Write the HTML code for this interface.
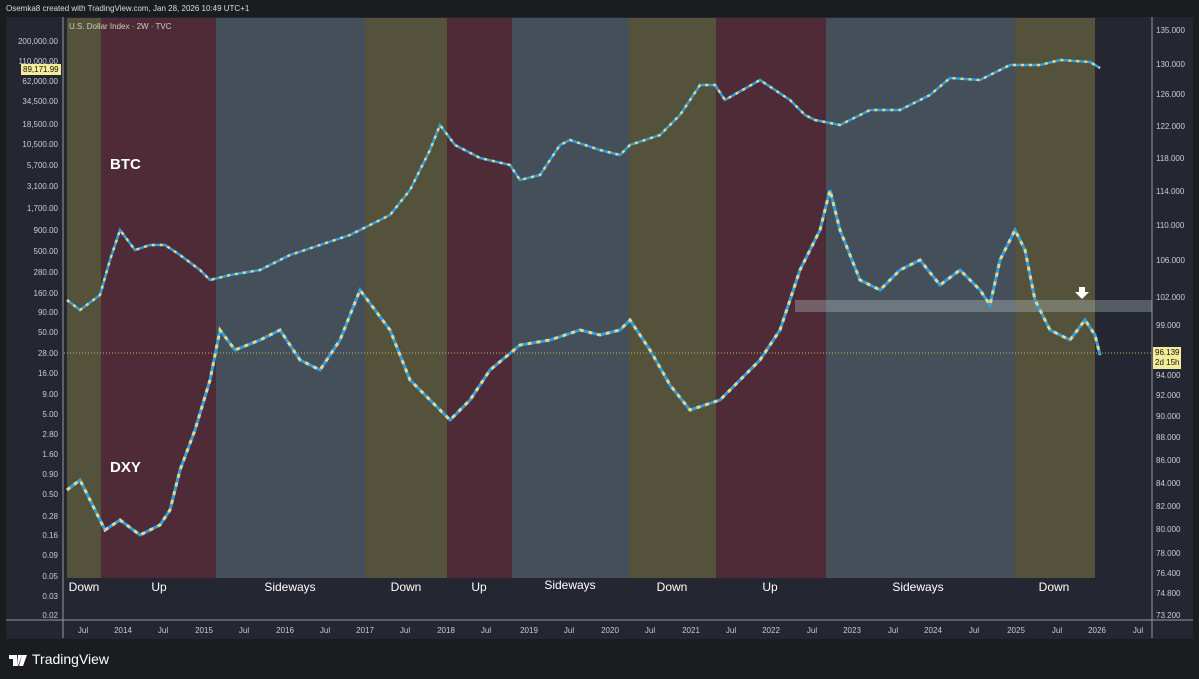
<!DOCTYPE html><html><head><style>
body{margin:0;width:1199px;height:679px;background:#1b1c1f;font-family:"Liberation Sans",sans-serif;overflow:hidden;position:relative}
.t{position:absolute;white-space:nowrap}
.la{position:absolute;right:1141px;font-size:8px;color:#c8ccd4}
.ra{position:absolute;left:1156px;font-size:8px;color:#c8ccd4}
.xa{position:absolute;top:626px;font-size:8px;color:#c8ccd4;transform:translateX(-50%)}
.lb{position:absolute;top:580px;font-size:12px;color:#fff;transform:translateX(-50%)}
</style></head><body>
<div class="t" style="left:6px;top:4px;font-size:8px;color:#ddd">Osemka8 created with TradingView.com, Jan 28, 2026 10:49 UTC+1</div>
<div style="position:absolute;left:6px;top:17px;width:1187px;height:622px;background:#242731"></div>
<svg style="position:absolute;left:0;top:0" width="1199" height="679">
<g>
<rect x="67" y="18" width="34" height="560" fill="#55523b"/>
<rect x="101" y="18" width="115" height="560" fill="#4f2b37"/>
<rect x="216" y="18" width="149" height="560" fill="#454f5a"/>
<rect x="365" y="18" width="82" height="560" fill="#55523b"/>
<rect x="447" y="18" width="65" height="560" fill="#4f2b37"/>
<rect x="512" y="18" width="117" height="560" fill="#454f5a"/>
<rect x="629" y="18" width="87" height="560" fill="#55523b"/>
<rect x="716" y="18" width="110" height="560" fill="#4f2b37"/>
<rect x="826" y="18" width="189" height="560" fill="#454f5a"/>
<rect x="1015" y="18" width="80" height="560" fill="#55523b"/>
</g>
<rect x="795" y="300" width="357" height="12" fill="rgba(200,215,215,0.3)"/>
<line x1="64" y1="353" x2="1152" y2="353" stroke="#c9b26a" stroke-dasharray="1,2" stroke-width="1"/>
<line x1="63" y1="17" x2="63" y2="638" stroke="#999" />
<line x1="1152" y1="17" x2="1152" y2="638" stroke="#999"/>
<line x1="6" y1="620" x2="1193" y2="620" stroke="#999"/>
<polyline fill="none" stroke="#2e9fe0" stroke-width="2.5" points="67,300 80,310 100,295 110,260 120,230 135,250 150,245 165,245 180,255 200,270 210,280 230,275 260,270 290,255 320,245 350,235 370,225 390,215 410,190 430,150 440,125 455,145 480,158 510,165 520,180 540,175 560,145 570,140 600,150 620,155 630,145 660,135 680,115 700,85 715,85 725,100 760,80 790,100 805,115 815,120 840,125 870,110 900,110 930,95 950,78 980,80 1010,65 1040,65 1060,60 1090,62 1100,68"/>
<polyline fill="none" stroke="#e6d58a" stroke-width="2.5" stroke-dasharray="3,5" points="67,300 80,310 100,295 110,260 120,230 135,250 150,245 165,245 180,255 200,270 210,280 230,275 260,270 290,255 320,245 350,235 370,225 390,215 410,190 430,150 440,125 455,145 480,158 510,165 520,180 540,175 560,145 570,140 600,150 620,155 630,145 660,135 680,115 700,85 715,85 725,100 760,80 790,100 805,115 815,120 840,125 870,110 900,110 930,95 950,78 980,80 1010,65 1040,65 1060,60 1090,62 1100,68"/>
<polyline fill="none" stroke="#2e9fe0" stroke-width="3" points="67,490 80,480 95,510 105,530 120,520 140,535 160,525 170,510 180,470 195,430 210,380 220,330 235,350 260,340 280,330 300,360 320,370 340,340 360,290 375,310 390,330 410,380 430,400 450,420 470,400 490,370 520,345 550,340 580,330 600,335 620,330 630,320 650,350 670,385 690,410 720,400 740,380 760,360 780,330 800,270 820,230 830,190 840,230 860,280 880,290 900,270 920,260 940,285 960,270 980,290 990,305 1000,260 1015,230 1025,250 1035,300 1050,330 1070,340 1085,320 1095,335 1100,355"/>
<polyline fill="none" stroke="#e6d58a" stroke-width="3" stroke-dasharray="4,5" points="67,490 80,480 95,510 105,530 120,520 140,535 160,525 170,510 180,470 195,430 210,380 220,330 235,350 260,340 280,330 300,360 320,370 340,340 360,290 375,310 390,330 410,380 430,400 450,420 470,400 490,370 520,345 550,340 580,330 600,335 620,330 630,320 650,350 670,385 690,410 720,400 740,380 760,360 780,330 800,270 820,230 830,190 840,230 860,280 880,290 900,270 920,260 940,285 960,270 980,290 990,305 1000,260 1015,230 1025,250 1035,300 1050,330 1070,340 1085,320 1095,335 1100,355"/>
<path d="M1079 287h6v5h4l-7 7-7-7h4z" fill="#fff"/>
<path d="M9 655h8v11h-4v-7h-4z M18 655h4l-4 11h-1z M22 655h5l-4 11h-4z" fill="#fff"/>
</svg>
<div class="t" style="left:69px;top:22px;font-size:8px;color:#cfcfb8">U.S. Dollar Index · 2W · TVC</div>
<div class="t" style="left:110px;top:156px;font-size:15px;font-weight:bold;color:#fff">BTC</div>
<div class="t" style="left:110px;top:459px;font-size:15px;font-weight:bold;color:#fff">DXY</div>
<div class="la" style="top:37px">200,000.00</div>
<div class="la" style="top:57px">110,000.00</div>
<div class="t" style="left:21px;top:64px;background:#f3ec9a;color:#111;font-size:8px;padding:1px 2px">89,171.99</div>
<div class="la" style="top:77px">62,000.00</div>
<div class="la" style="top:97px">34,500.00</div>
<div class="la" style="top:120px">18,500.00</div>
<div class="la" style="top:140px">10,500.00</div>
<div class="la" style="top:161px">5,700.00</div>
<div class="la" style="top:182px">3,100.00</div>
<div class="la" style="top:204px">1,700.00</div>
<div class="la" style="top:226px">900.00</div>
<div class="la" style="top:247px">500.00</div>
<div class="la" style="top:268px">280.00</div>
<div class="la" style="top:289px">160.00</div>
<div class="la" style="top:308px">90.00</div>
<div class="la" style="top:328px">50.00</div>
<div class="la" style="top:349px">28.00</div>
<div class="la" style="top:369px">16.00</div>
<div class="la" style="top:390px">9.00</div>
<div class="la" style="top:410px">5.00</div>
<div class="la" style="top:430px">2.80</div>
<div class="la" style="top:450px">1.60</div>
<div class="la" style="top:470px">0.90</div>
<div class="la" style="top:490px">0.50</div>
<div class="la" style="top:512px">0.28</div>
<div class="la" style="top:531px">0.16</div>
<div class="la" style="top:551px">0.09</div>
<div class="la" style="top:572px">0.05</div>
<div class="la" style="top:592px">0.03</div>
<div class="la" style="top:611px">0.02</div>
<div class="ra" style="top:26px">135.000</div>
<div class="ra" style="top:60px">130.000</div>
<div class="ra" style="top:90px">126.000</div>
<div class="ra" style="top:122px">122.000</div>
<div class="ra" style="top:154px">118.000</div>
<div class="ra" style="top:187px">114.000</div>
<div class="ra" style="top:221px">110.000</div>
<div class="ra" style="top:256px">106.000</div>
<div class="ra" style="top:293px">102.000</div>
<div class="ra" style="top:321px">99.000</div>
<div class="t" style="left:1153px;top:347px;background:#f3ec9a;color:#111;font-size:8px;padding:1px 2px;line-height:10px">96.139<br>2d 15h</div>
<div class="ra" style="top:371px">94.000</div>
<div class="ra" style="top:391px">92.000</div>
<div class="ra" style="top:412px">90.000</div>
<div class="ra" style="top:433px">88.000</div>
<div class="ra" style="top:456px">86.000</div>
<div class="ra" style="top:479px">84.000</div>
<div class="ra" style="top:502px">82.000</div>
<div class="ra" style="top:525px">80.000</div>
<div class="ra" style="top:549px">78.000</div>
<div class="ra" style="top:569px">76.400</div>
<div class="ra" style="top:589px">74.800</div>
<div class="ra" style="top:611px">73.200</div>
<div class="xa" style="left:83px">Jul</div><div class="xa" style="left:123px">2014</div><div class="xa" style="left:163px">Jul</div><div class="xa" style="left:204px">2015</div><div class="xa" style="left:244px">Jul</div><div class="xa" style="left:285px">2016</div><div class="xa" style="left:325px">Jul</div><div class="xa" style="left:365px">2017</div><div class="xa" style="left:405px">Jul</div><div class="xa" style="left:446px">2018</div><div class="xa" style="left:486px">Jul</div><div class="xa" style="left:529px">2019</div><div class="xa" style="left:569px">Jul</div><div class="xa" style="left:610px">2020</div><div class="xa" style="left:650px">Jul</div><div class="xa" style="left:691px">2021</div><div class="xa" style="left:731px">Jul</div><div class="xa" style="left:771px">2022</div><div class="xa" style="left:812px">Jul</div><div class="xa" style="left:852px">2023</div><div class="xa" style="left:893px">Jul</div><div class="xa" style="left:933px">2024</div><div class="xa" style="left:974px">Jul</div><div class="xa" style="left:1016px">2025</div><div class="xa" style="left:1057px">Jul</div><div class="xa" style="left:1097px">2026</div><div class="xa" style="left:1138px">Jul</div>
<div class="lb" style="left:84px">Down</div><div class="lb" style="left:159px">Up</div><div class="lb" style="left:290px">Sideways</div><div class="lb" style="left:406px">Down</div><div class="lb" style="left:479px">Up</div><div class="lb" style="left:570px;top:578px">Sideways</div><div class="lb" style="left:672px">Down</div><div class="lb" style="left:770px">Up</div><div class="lb" style="left:918px">Sideways</div><div class="lb" style="left:1054px">Down</div>
<div class="t" style="left:32px;top:651px;font-size:14px;color:#fff">TradingView</div>
</body></html>
